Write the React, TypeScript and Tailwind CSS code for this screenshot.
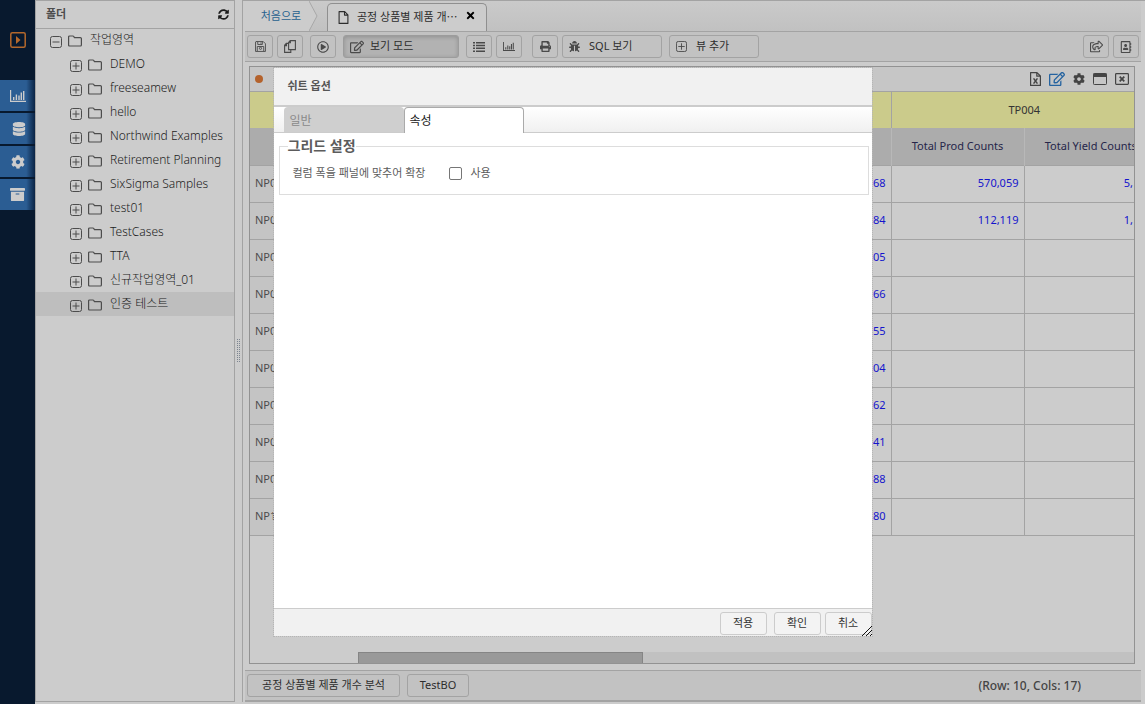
import React from 'react';
import {
  FaArchive, FaBug, FaCog, FaDatabase, FaPrint, FaRegAddressBook, FaRegEdit,
  FaRegPlayCircle, FaRegShareSquare, FaSyncAlt, FaTimes,
} from 'react-icons/fa';

type IconProps = { className?: string };

function ChartIcon({ className }: IconProps) {
  return (
    <svg viewBox="0 0 16 12" className={className} fill="currentColor" aria-hidden="true">
      <path d="M0 0h1.200v10.800H16V12H0zM3 7h1.400v3H3zM5.700 4.500h1.400V10H5.700zM8.300 5.500h1.400V10H8.300zM10.600 2.500H12V10h-1.400zM13 1h1.400v9H13z" />
    </svg>
  );
}

function ListIcon({ className }: IconProps) {
  return (
    <svg viewBox="0 0 12 10" className={className} fill="currentColor" aria-hidden="true">
      <path d="M0 0h2v1.500H0zM3 0h9v1.500H3zM0 2.800h2v1.500H0zM3 2.800h9v1.500H3zM0 5.600h2v1.500H0zM3 5.600h9v1.500H3zM0 8.400h2v1.500H0zM3 8.400h9v1.500H3z" />
    </svg>
  );
}

function BoxIcon({ plus, className }: IconProps & { plus: boolean }) {
  return (
    <svg viewBox="0 0 12 12" className={className} fill="none" stroke="currentColor" aria-hidden="true">
      <rect x="0.5" y="0.5" width="11" height="11" rx="2" />
      <path d={plus ? 'M2.500 6h7M6 2.500v7' : 'M2.500 6h7'} />
    </svg>
  );
}

function FolderIcon({ className }: IconProps) {
  return (
    <svg viewBox="0 0 14 12" className={className} fill="none" stroke="currentColor" strokeWidth="1.200" strokeLinejoin="round" aria-hidden="true">
      <path d="M.6 10V2Q.6 1 1.600 1h3.200q.7 0 1 .6l.5 1h6q1.100 0 1.100 1V10q0 1-1 1H1.600q-1 0-1-1z" />
    </svg>
  );
}

function SaveIcon({ className }: IconProps) {
  return (
    <svg viewBox="0 0 12 12" className={className} fill="none" stroke="currentColor" aria-hidden="true">
      <path d="M1 .6h8l2.400 2.400v8.400H.6V1zM3 .8v3h5v-3M2.500 11V6h7v5" />
      <circle cx="6" cy="8" r="1.200" />
      <path d="M6.500 1.500v1.500" />
    </svg>
  );
}

function CopyIcon({ className }: IconProps) {
  return (
    <svg viewBox="0 0 12 13" className={className} fill="none" stroke="currentColor" strokeWidth="1.100" aria-hidden="true">
      <path d="M6.200.6h5.200v9H4.600V2.400zM6.400.8v2H4.600M4.500 3.400H2.300L.6 5.200v7.200h6.200V9.700M2.500 3.600v2H.8" />
    </svg>
  );
}

function FileIcon({ className }: IconProps) {
  return (
    <svg viewBox="0 0 10 13" className={className} fill="none" stroke="currentColor" strokeWidth="1.100" strokeLinejoin="round" aria-hidden="true">
      <path d="M.6.6h5.600l3.200 3.300v8.500H.6zM6 .6v3.500h3.400" />
    </svg>
  );
}

function ExcelIcon({ className }: IconProps) {
  return (
    <svg viewBox="0 0 11 14" className={className} fill="none" stroke="currentColor" strokeWidth="1.200" strokeLinejoin="round" aria-hidden="true">
      <path d="M.6.6h6.400l3.400 3.400v9.400H.6zM6.800.6v3.600h3.600" />
      <path d="m4 7 3 4M7 7l-3 4" strokeWidth="1.300" />
      <path d="M3 6.800h1.700M6.300 6.800H8M3 11.200h1.700M6.300 11.200H8" strokeWidth="0.800" />
    </svg>
  );
}

function MaximizeIcon({ className }: IconProps) {
  return (
    <svg viewBox="0 0 14 12" className={className} aria-hidden="true">
      <rect x="0.5" y="0.5" width="13" height="11" rx="0.8" fill="none" stroke="currentColor" />
      <path d="M.5.5h13v3.500H.5z" fill="currentColor" />
    </svg>
  );
}

function CloseIcon({ className }: IconProps) {
  return (
    <svg viewBox="0 0 14 12" className={className} fill="none" stroke="currentColor" aria-hidden="true">
      <rect x="0.6" y="0.6" width="12.800" height="10.800" rx="0.8" strokeWidth="1.200" />
      <path d="m4.700 3.600 4.600 4.800M9.300 3.600 4.700 8.400" strokeWidth="1.700" />
    </svg>
  );
}

function RunIcon({ className }: IconProps) {
  return (
    <svg viewBox="0 0 16 16" className={className} aria-hidden="true">
      <rect x="0.8" y="0.8" width="14.400" height="14.400" rx="1.500" fill="none" stroke="currentColor" strokeWidth="1.500" />
      <path d="M6 4v8l4.500-4z" fill="currentColor" />
    </svg>
  );
}

const folders = [
  'DEMO', 'freeseamew', 'hello', 'Northwind Examples', 'Retirement Planning', 'SixSigma Samples',
  'test01', 'TestCases', 'TTA', '신규작업영역_01', '인증 테스트',
];

const rows = [
  ['NP0', '68', '570,059', '5,'],
  ['NP0', '84', '112,119', '1,'],
  ['NP0', '05', '', ''],
  ['NP0', '66', '', ''],
  ['NP0', '55', '', ''],
  ['NP0', '04', '', ''],
  ['NP0', '62', '', ''],
  ['NP0', '41', '', ''],
  ['NP0', '88', '', ''],
  ['NP1', '80', '', ''],
];

function RailButton({ label, children }: { label: string; children: React.ReactNode }) {
  return (
    <button aria-label={label} className="flex h-[31px] w-full items-center justify-center bg-linear-to-r from-[#2b5d93] from-75% to-[#0a2445] text-[#cccccc]">
      {children}
    </button>
  );
}

function ToolButton({ label, children }: { label: string; children: React.ReactNode }) {
  return (
    <button aria-label={label} className="flex h-[23px] w-[26px] shrink-0 items-center justify-center rounded-[3px] border border-[#a3a3a3] text-[#4a4a4a]">
      {children}
    </button>
  );
}

function Sidebar() {
  return (
    <aside className="flex w-[200px] shrink-0 flex-col border border-[#a3a3a3] text-[#4c4c4c]">
      <header className="flex h-7 shrink-0 items-center justify-between border-b border-[#a3a3a3] pr-[5px] pl-[10px]">
        <h2 className="text-[11px] font-semibold">폴더</h2>
        <button aria-label="새로고침" className="text-[#1c1c1c]"><FaSyncAlt className="size-[11px]" /></button>
      </header>
      <ul className="-mt-px font-light text-[#1c1c1c]">
        <li className="flex h-6 items-center pl-[14px]">
          <BoxIcon plus={false} className="mt-[3px] size-3 text-[#4c4c4c]" />
          <FolderIcon className="mt-[2px] ml-[6px] h-3 w-[14px] text-[#4c4c4c]" />
          <span className="ml-2">작업영역</span>
        </li>
        {folders.map((name) => (
          <li key={name} className={name === '인증 테스트' ? 'flex h-6 items-center bg-[#bebebe] pl-[34px]' : 'flex h-6 items-center pl-[34px]'}>
            <BoxIcon plus className="mt-[3px] size-3 shrink-0 text-[#4c4c4c]" />
            <FolderIcon className="mt-[2px] ml-[6px] h-3 w-[14px] shrink-0 text-[#4c4c4c]" />
            <span className="ml-2 whitespace-nowrap">{name}</span>
          </li>
        ))}
      </ul>
    </aside>
  );
}

function GridPanel() {
  return (
    <section className="mt-1 mr-[6px] mb-[6px] ml-1 flex min-h-0 flex-1 flex-col border border-[#929292]">
      <header className="flex h-[25px] shrink-0 items-center justify-between border-b border-[#a3a3a3] bg-[#c6c6c6] px-[5px]">
        <span className="size-2 rounded-full bg-[#b4622c]" />
        <div className="flex items-center gap-[8px] text-[#444444]">
          <button aria-label="엑셀"><ExcelIcon className="h-[14px] w-[11px]" /></button>
          <button aria-label="편집" className="text-[#2563a0]"><FaRegEdit className="size-[16px]" /></button>
          <button aria-label="설정"><FaCog className="size-[12px]" /></button>
          <button aria-label="최대화"><MaximizeIcon className="h-3 w-[14px]" /></button>
          <button aria-label="닫기"><CloseIcon className="h-3 w-[14px]" /></button>
        </div>
      </header>
      <div className="min-h-0 flex-1 overflow-hidden">
        <table className="w-[907px] table-fixed border-collapse text-[11px]">
          <colgroup>
            <col className="w-[109px]" />
            <col className="w-[133px]" />
            <col className="w-[133px]" />
            <col className="w-[133px]" />
            <col className="w-[133px]" />
            <col className="w-[133px]" />
            <col className="w-[133px]" />
          </colgroup>
          <thead>
            <tr className="h-[36px] bg-[#cbcb8b] text-[#333333]">
              <td className="border-r border-[#a3a3a3]" />
              <td colSpan={2} className="border-r border-[#a3a3a3]" />
              <td colSpan={2} className="border-r border-[#a3a3a3]" />
              <th colSpan={2} className="font-normal">TP004</th>
            </tr>
            <tr className="h-[37px] border-b border-[#a3a3a3] bg-[#acacac] text-[#26264a]">
              <td className="border-r border-[#b8b8b8]" />
              <td />
              <td />
              <td />
              <td className="border-r border-[#b8b8b8]" />
              <th className="border-r border-[#b8b8b8] font-normal">Total Prod Counts</th>
              <th className="font-normal">Total Yield Counts</th>
            </tr>
          </thead>
          <tbody>
            {rows.map(([code, total, prod, yieldCount], i) => (
              <tr key={i} className="h-[37px] border-b border-[#a3a3a3] text-right text-[#1414cc]">
                <td className="bg-[#c4c4c4] pl-[5px] text-left text-[#4c4c4c]">{code}</td>
                <td />
                <td />
                <td />
                <td className="border-r border-[#a3a3a3] pr-[5px]">{total}</td>
                <td className="border-r border-[#a3a3a3] pr-[5px]">{prod}</td>
                <td className="pr-6">{yieldCount}</td>
              </tr>
            ))}
          </tbody>
        </table>
      </div>
      <div className="ml-[108px] h-[11px] shrink-0 bg-[#c1c1c1]">
        <div className="h-full w-[285px] border border-b-0 border-[#858585] bg-[#999999]" />
      </div>
    </section>
  );
}

function Dialog() {
  const action = 'h-[23px] w-[47px] rounded-[3px] border border-[#cccccc] bg-[#f3f3f3] text-[11px] text-[#333333]';
  return (
    <div className="fixed inset-0 flex items-center justify-center">
      <section role="dialog" aria-label="쉬트 옵션" className="relative flex h-[570px] w-[600px] flex-col border border-dotted border-[#b5b5b5] bg-white bg-clip-padding text-[#5c5c5c]">
        <header className="flex h-[39px] shrink-0 items-center border-b-2 border-[#cccccc] bg-[#f1f1f1] px-[14px] text-[11px] font-semibold text-[#555555]">쉬트 옵션</header>
        <div role="tablist" className="flex h-[26px] shrink-0 border-b border-[#cccccc] bg-linear-to-b from-white to-[#f0f0f0] pl-[10px] text-xs">
          <button role="tab" aria-selected="false" className="h-[25px] w-[120px] rounded-t-[4px] bg-[#cfcfcf] px-[6px] pt-[3px] text-left text-[#8a8a8a]">일반</button>
          <button role="tab" aria-selected="true" className="h-[26px] w-[120px] rounded-t-[4px] border border-b-0 border-[#aaaaaa] bg-white px-[5px] text-left text-[#222222]">속성</button>
        </div>
        <div className="flex-1 pt-[2px] pr-[3px] pl-[5px]">
          <fieldset className="h-[60px] border border-[#dddddd]">
            <legend className="ml-[8px] text-[14px] leading-[22px] font-semibold">그리드 설정</legend>
            <div className="flex items-center pt-[9px] pl-[13px] text-[11px]">
              <span id="fit-label">컬럼 폭을 패널에 맞추어 확장</span>
              <label className="ml-6 flex items-center gap-2">
                <input type="checkbox" aria-describedby="fit-label" className="size-[13px] appearance-none rounded-[2px] border border-[#767676] bg-white" />
                사용
              </label>
            </div>
          </fieldset>
        </div>
        <footer className="flex h-7 shrink-0 items-start justify-end border-t border-[#cccccc] bg-[#f1f1f1] pt-[3px]">
          <button className={action}>적용</button>
          <button className={`${action} ml-[7px]`}>확인</button>
          <button className={`${action} ml-1`}>취소</button>
        </footer>
        <svg viewBox="0 0 10 10" className="absolute right-0 bottom-0 size-[10px]" stroke="#111111" aria-hidden="true">
          <path d="M0 10 10 0M4 10l6-6M8 10l2-2" />
        </svg>
      </section>
    </div>
  );
}

export default function App() {
  return (
    <div className="flex h-screen bg-[#cccccc] font-['Noto_Sans','Noto_Sans_CJK_KR',sans-serif] text-xs">
      <nav className="flex w-[35px] shrink-0 flex-col bg-[#08192e]">
        <div className="flex h-20 items-center justify-center text-[#b4682c]">
          <button aria-label="실행"><RunIcon className="size-4" /></button>
        </div>
        <div className="flex flex-col gap-[2px]">
          <RailButton label="분석"><ChartIcon className="h-3 w-4" /></RailButton>
          <RailButton label="데이터"><FaDatabase className="ml-[2px] size-[14px]" /></RailButton>
          <RailButton label="설정"><FaCog className="size-[14px]" /></RailButton>
          <RailButton label="보관함"><FaArchive className="size-[15px]" /></RailButton>
        </div>
      </nav>
      <div className="flex min-w-0 flex-1 pb-[2px]">
        <Sidebar />
        <div className="flex w-[7px] shrink-0 items-center justify-center">
          <svg viewBox="0 0 4 24" className="h-6 w-1" stroke="#7d8590" strokeDasharray="1 1" aria-hidden="true">
            <path d="M.5 0v24M2.500 0v24" />
          </svg>
        </div>
        <main className="flex min-w-0 flex-1 flex-col border-t border-l border-[#a3a3a3] pr-1 pl-[2px]">
          <div className="flex h-[30px] shrink-0 items-end bg-linear-to-b from-[#cacaca] to-[#c1c1c1] text-[11px]">
            <a href="#home" className="flex h-full w-[64px] items-center justify-center bg-[#cccccc] pl-2 text-[#28628f]">처음으로</a>
            <svg viewBox="0 0 10 30" className="h-[30px] w-[10px]" fill="#cccccc" stroke="#a8a8a8" aria-hidden="true">
              <path d="M0 0 8 15 0 30" />
            </svg>
            <div className="ml-2 flex h-[28px] w-[160px] items-center rounded-t-[5px] border border-b-0 border-[#8f8f8f] bg-[#cccccc] pl-[10px] text-[#2d2d2d]">
              <FileIcon className="h-[13px] w-[11px] shrink-0" />
              <span className="ml-2 whitespace-nowrap">공정 상품별 제품 개⋯</span>
              <button aria-label="탭 닫기" className="ml-[7px] text-black"><FaTimes className="mb-1 size-[11px]" /></button>
            </div>
          </div>
          <div className="flex h-[31px] shrink-0 items-center border-y border-[#a3a3a3] bg-[#c2c2c2] px-[2px] text-[11px] text-[#2d2d2d]">
            <ToolButton label="저장"><SaveIcon className="size-[11px]" /></ToolButton>
            <div className="ml-1 flex"><ToolButton label="복사"><CopyIcon className="h-[13px] w-3" /></ToolButton></div>
            <div className="ml-[7px] flex"><ToolButton label="실행"><FaRegPlayCircle className="size-3" /></ToolButton></div>
            <button className="ml-[7px] flex h-[23px] w-[116px] items-center rounded-[3px] border border-[#9c9c9c] bg-[#b2b2b2] pl-[6px] shadow-[inset_0_1px_4px_rgba(0,0,0,0.2)]">
              <FaRegEdit className="size-[14px] text-[#4a4a4a]" />
              <span className="ml-[6px]">보기 모드</span>
            </button>
            <div className="ml-[7px] flex gap-1">
              <ToolButton label="목록"><ListIcon className="h-[10px] w-3" /></ToolButton>
              <ToolButton label="차트"><ChartIcon className="h-[9px] w-3" /></ToolButton>
            </div>
            <div className="ml-[10px] flex"><ToolButton label="인쇄"><FaPrint className="size-[11px]" /></ToolButton></div>
            <button className="ml-1 flex h-[23px] w-[100px] items-center rounded-[3px] border border-[#a3a3a3] pl-[6px]">
              <FaBug className="size-[11px] text-[#4a4a4a]" />
              <span className="ml-[9px]">SQL 보기</span>
            </button>
            <button className="ml-[7px] flex h-[23px] w-[90px] items-center rounded-[3px] border border-[#a3a3a3] pl-[6px]">
              <BoxIcon plus className="size-[11px] text-[#4a4a4a]" />
              <span className="ml-[9px]">뷰 추가</span>
            </button>
            <div className="ml-auto flex gap-1">
              <ToolButton label="공유"><FaRegShareSquare className="size-[13px]" /></ToolButton>
              <ToolButton label="주소록"><FaRegAddressBook className="size-3" /></ToolButton>
            </div>
          </div>
          <GridPanel />
          <footer className="flex h-8 shrink-0 items-center border-t border-b-2 border-[#a3a3a3] bg-[#c2c2c2] px-[2px] text-[11px] text-[#2d2d2d]">
            <button className="h-[23px] w-[153px] rounded-[3px] border border-[#a3a3a3]">공정 상품별 제품 개수 분석</button>
            <button className="ml-[7px] h-[23px] w-[62px] rounded-[3px] border border-[#a3a3a3]">TestBO</button>
            <span className="mr-[58px] ml-auto text-xs font-medium text-[#444444]">(Row: 10, Cols: 17)</span>
          </footer>
        </main>
      </div>
      <Dialog />
    </div>
  );
}
